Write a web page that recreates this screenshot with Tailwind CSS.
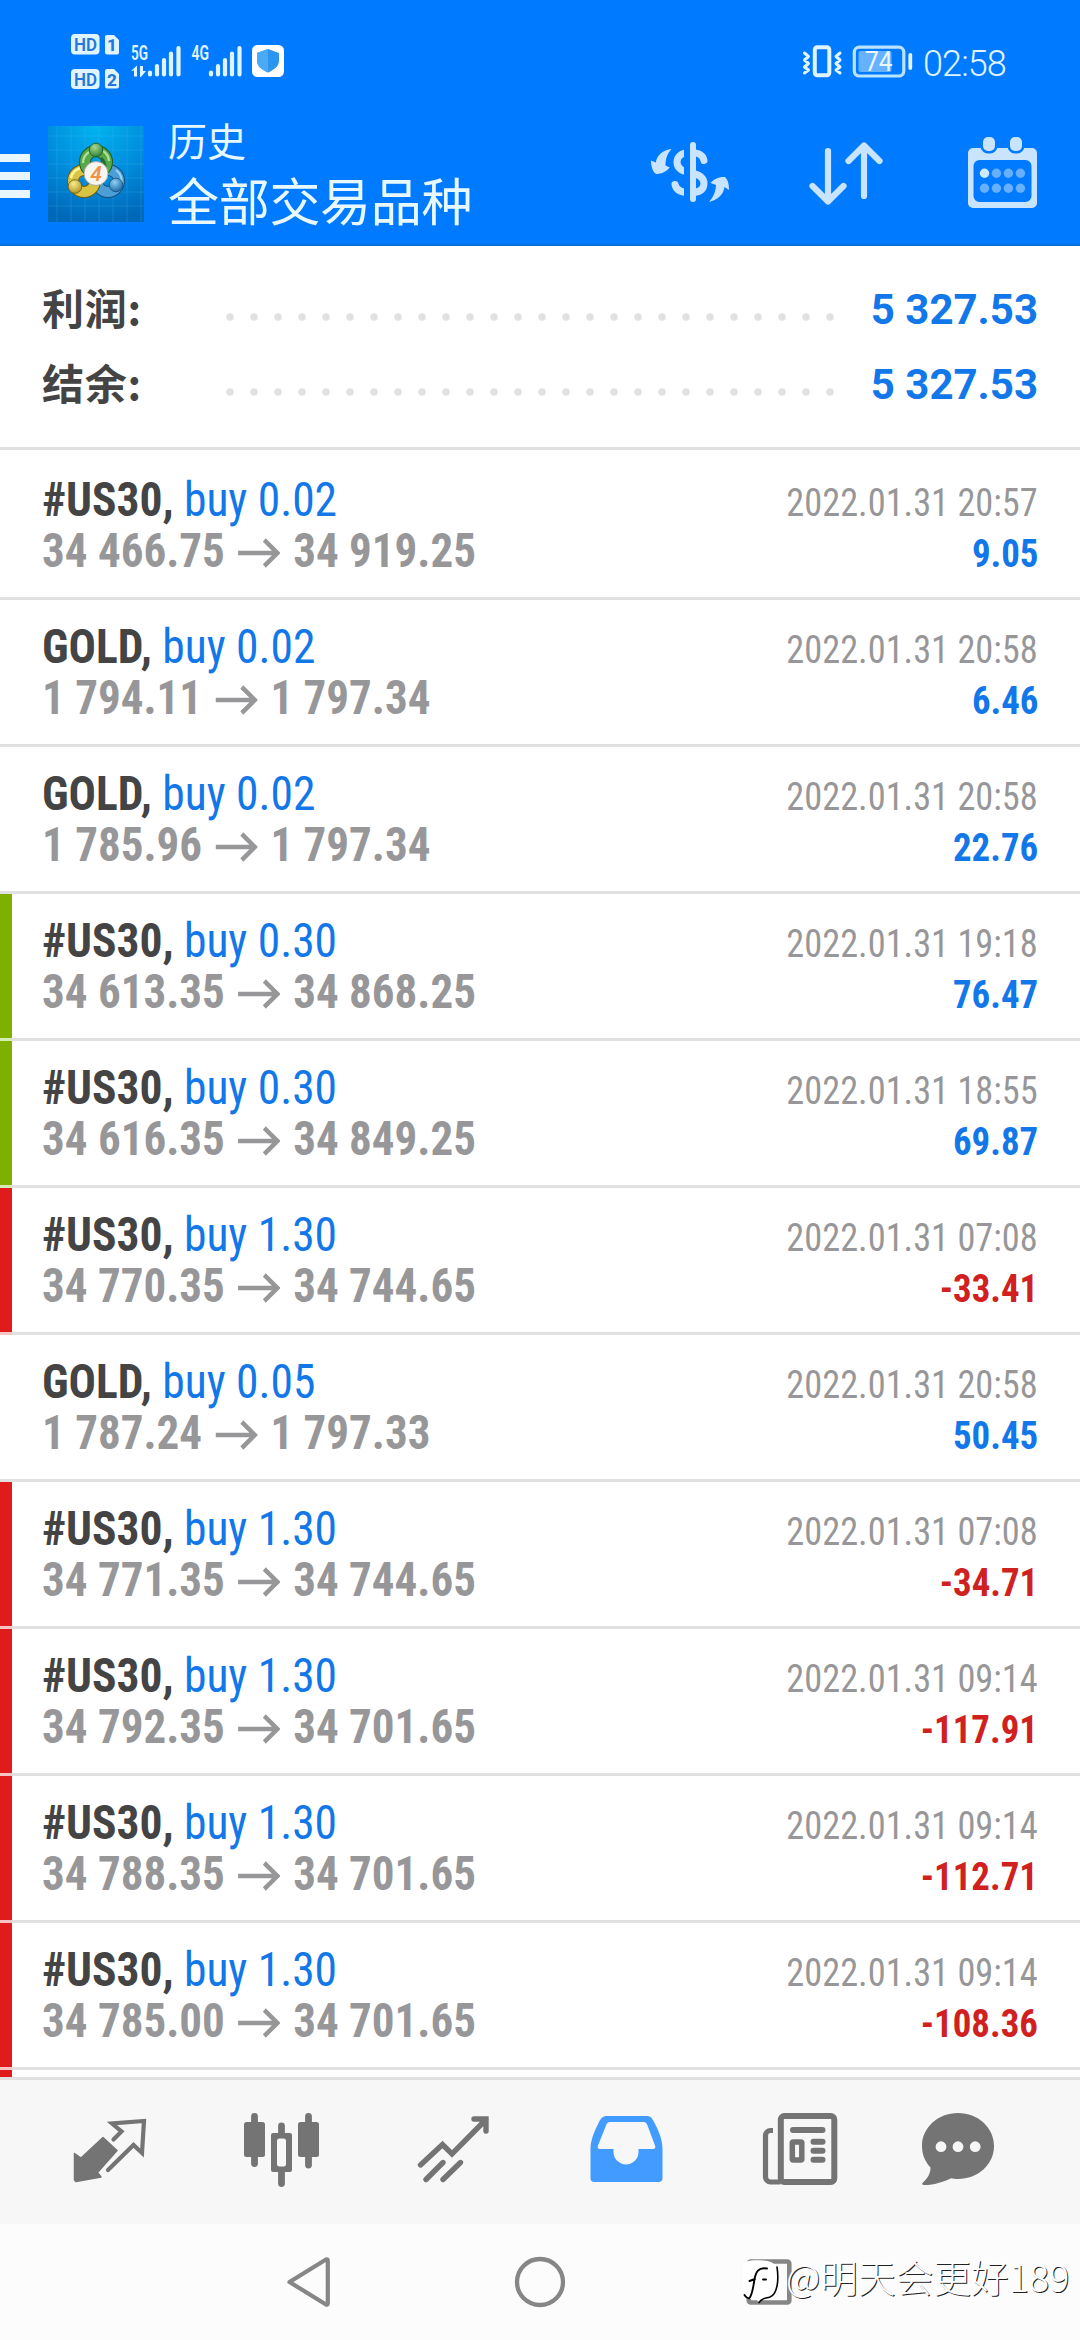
<!DOCTYPE html>
<html lang="zh-CN">
<head>
<meta charset="utf-8">
<title>历史</title>
<script src="https://cdn.jsdelivr.net/npm/@tailwindcss/browser@4"></script>
</head>
<body class="w-[1080px] h-[2340px] overflow-hidden bg-white flex flex-col relative font-['Roboto','Noto_Sans_CJK_SC',sans-serif]">

<header class="h-[246px] shrink-0 bg-[#007aff] border-b-2 border-[#0a6fd6] flex flex-col">
  <!-- status bar -->
  <div class="h-[123px] flex justify-between items-start pl-[70px] pr-[71px]">
    <svg class="w-[216px] h-[64px] mt-[30px]" viewBox="70 30 216 64" fill="#e0f4ff">
      <rect x="71" y="34" width="28.5" height="20.5" rx="4"/>
      <rect x="71" y="69" width="28.5" height="20" rx="4"/>
      <path d="M107 35h7l5 5v12.500a2 2 0 0 1-2 2h-10a2 2 0 0 1-2-2v-15.500a2 2 0 0 1 2-2zM107 69h7l5 5v12.500a2 2 0 0 1-2 2h-10a2 2 0 0 1-2-2v-15.500a2 2 0 0 1 2-2z"/>
      <g fill="#2478dc" font-family="Roboto" font-weight="600" font-size="19">
        <text x="74" y="51.300" textLength="23" lengthAdjust="spacingAndGlyphs">HD</text>
        <text x="74" y="86" textLength="23" lengthAdjust="spacingAndGlyphs">HD</text>
        <text x="107" y="51" font-size="17" font-weight="800">1</text>
        <text x="107" y="85.500" font-size="17" font-weight="800">2</text>
      </g>
      <g font-family="Roboto" font-weight="600" font-size="19.500">
        <text x="131" y="60" textLength="17" lengthAdjust="spacingAndGlyphs">5G</text>
        <text x="191.500" y="60" textLength="17.500" lengthAdjust="spacingAndGlyphs">4G</text>
      </g>
      <path d="M131 71l6-5.500v11h-3v-6zM140 66h3v5h3l-5 6h-1z"/>
      <g stroke="#e0f4ff" stroke-width="4.200" stroke-linecap="round">
        <path d="M150 72.500v2M157 66v8.500M164 60v14.500M171 53.500v21M178.500 48v26.500M211 72.500v2M218 66v8.500M225 60v14.500M232 53.500v21M239.500 48v26.500"/>
      </g>
      <rect x="252" y="45" width="32" height="32" rx="5.500" fill="#fff"/>
      <path d="M268 49l11 4v8c0 5-5 9-11 11.500c-6-2.500-11-6.500-11-11.500v-8z" fill="#2a96ef"/>
      <path d="M268 49v23.500c-6-2.500-11-6.500-11-11.500v-8z" fill="#4aaaf5"/>
    </svg>
    <div class="flex items-center mt-[42px] h-[40px]">
      <svg class="w-[116px] h-[40px] mr-[6px]" viewBox="801 42 116 40" fill="none" stroke="#e0f4ff">
        <rect x="814.800" y="47.300" width="14.500" height="28" rx="2.500" stroke-width="4"/>
        <path d="M804.500 53l4 3.500l-4 3.500l4 3.500l-4 3.500l4 3l-4 3M840 53l-4 3.500l4 3.500l-4 3.500l4 3.500l-4 3l4 3" stroke-width="3" stroke-linejoin="round" stroke-linecap="round"/>
        <rect x="854.300" y="47.200" width="49.500" height="28.800" rx="5" stroke-width="3.200" stroke="#b9e3ff"/>
        <rect x="858.500" y="51" width="33" height="21" rx="2" fill="#66b2ff" stroke="none"/>
        <path d="M910.300 55v13" stroke-width="3.800" stroke-linecap="round"/>
        <text x="865" y="71.300" textLength="27.500" lengthAdjust="spacingAndGlyphs" font-size="28" font-family="Roboto" fill="#eaf7ff" stroke="none">74</text>
      </svg>
      <span class="text-[36px] leading-[40px] mt-[3px] w-[86px] whitespace-nowrap font-['Roboto'] font-[350] text-[#e0f4ff] tracking-[-0.900px]">02:58</span>
    </div>
  </div>

  <!-- app bar -->
  <div class="flex-1 flex items-start">
    <div class="w-[30px] mt-[31px] flex flex-col gap-[10px]">
      <i class="h-2 bg-[#e8f7ff]"></i><i class="h-2 bg-[#e8f7ff]"></i><i class="h-2 bg-[#e8f7ff]"></i>
    </div>
    <svg class="w-[96px] h-[96px] ml-[18px] mt-[3px]" viewBox="48 126 96 96">
      <defs>
        <radialGradient id="bg" cx=".5" cy="0" r="1"><stop offset="0" stop-color="#00b4f0"/><stop offset=".55" stop-color="#008bdc"/><stop offset="1" stop-color="#0068b8"/></radialGradient>
        <radialGradient id="gr" cx=".4" cy=".3" r=".8"><stop offset="0" stop-color="#a8d890"/><stop offset="1" stop-color="#23772f"/></radialGradient>
        <radialGradient id="ye" cx=".4" cy=".3" r=".8"><stop offset="0" stop-color="#f8ec90"/><stop offset="1" stop-color="#a88a18"/></radialGradient>
        <radialGradient id="bl" cx=".4" cy=".3" r=".8"><stop offset="0" stop-color="#8fd0f4"/><stop offset="1" stop-color="#0f5fa0"/></radialGradient>
      </defs>
      <rect x="48" y="126" width="96" height="96" fill="url(#bg)"/>
      <path d="M57 126v96M71 126v96M85 126v96M99 126v96M113 126v96M127 126v96M141 126v96M48 136h96M48 150h96M48 164h96M48 178h96M48 192h96M48 206h96" stroke="#4cc4f4" stroke-opacity=".22" fill="none"/>
      <g fill="none">
        <circle cx="108" cy="181" r="11" stroke="#14507e" stroke-width="12"/>
        <circle cx="108" cy="181" r="11" stroke="#4b9fd6" stroke-width="10"/>
        <path d="M116 170a14 14 0 0 1 5 16" stroke="#a0d4f2" stroke-width="2"/>
        <circle cx="84" cy="181" r="11" stroke="#6d5c10" stroke-width="12"/>
        <circle cx="84" cy="181" r="11" stroke="#d8c440" stroke-width="10"/>
        <path d="M71 178a13 13 0 0 1 10-10" stroke="#fff3a0" stroke-width="2.500"/>
        <circle cx="96" cy="162" r="11" stroke="#1c5c28" stroke-width="12"/>
        <circle cx="96" cy="162" r="11" stroke="#56a848" stroke-width="10"/>
        <path d="M83 163a13 13 0 0 1 6-11M103 151a13 13 0 0 1 6 10" stroke="#b2e09a" stroke-width="2.200"/>
        <path d="M103 172c3-5 2-10-2-14" stroke="#1f7030" stroke-width="3"/>
      </g>
      <circle cx="96" cy="150" r="6.800" fill="url(#gr)" stroke="#1c5c28" stroke-width=".8"/>
      <circle cx="75" cy="186.500" r="6.800" fill="url(#ye)" stroke="#6d5c10" stroke-width=".8"/>
      <circle cx="116" cy="185" r="6.800" fill="url(#bl)" stroke="#14507e" stroke-width=".8"/>
      <circle cx="96" cy="173.500" r="12" fill="#f7f5f2" stroke="#a8a8a0" stroke-width="1"/>
      <text x="96" y="181" text-anchor="middle" font-family="Roboto" font-size="21" font-style="italic" font-weight="600" fill="#ee9448">4</text>
    </svg>
    <div class="ml-[24px] mt-[-2px] text-[#e8f8ff] flex-1 flex flex-col">
      <span class="text-[39px] leading-[44px]">历史</span>
      <span class="text-[51px] leading-[60px] mt-[9px] tracking-[-0.300px]">全部交易品种</span>
    </div>
    <div class="flex items-start mt-[12px] text-[#c8e4ff]">
      <svg class="w-[84px] h-[76px]" viewBox="648 135 84 76" fill="currentColor">
        <defs><clipPath id="cut"><path d="M660 140h24v70h-24zM695 140h24v70h-24z"/></clipPath></defs>
        <path d="M671.500 149C663 150 657 155 655.800 162.500L651 160.500C651 167 653 172 656 174C661 174 666 172 669.800 167.500L665.500 165.500C665.500 159 667 154 671.500 149z"/>
        <path d="M709 202C717 200 723.500 195 724.500 187L729 190C729 184 728 180 725 177C719 176.500 714 179 710.500 183L716 185C715.500 192 713.500 197 709 202z"/>
        <path clip-path="url(#cut)" d="M704 160.500C703 155 699 152.500 690 152.500C681 152.500 677 157 677 162C677 168 681 171 689 172.500C699 174 704 177 704 183.500C704 190 699 192.700 690 192.700C681 192.700 676 189.500 675 184.500" fill="none" stroke="currentColor" stroke-width="7" stroke-linecap="round"/>
        <path d="M693 145v54" stroke="currentColor" stroke-width="6" stroke-linecap="round"/>
      </svg>
      <svg class="w-[84px] h-[76px] ml-[72px]" viewBox="804 135 84 76" fill="none" stroke="currentColor" stroke-width="6.200" stroke-linecap="round" stroke-linejoin="round">
        <path d="M828 151v50M812.500 186l15.500 15.500l15.500-15.500M864 196v-50M848.500 161l15.500-15.500l15.500 15.500"/>
      </svg>
      <svg class="w-[84px] h-[76px] ml-[72px] mr-[36px]" viewBox="960 135 84 76">
        <path fill-rule="evenodd" fill="currentColor" d="M973 148h59a5 5 0 0 1 5 5v50a5 5 0 0 1-5 5h-59a5 5 0 0 1-5-5v-50a5 5 0 0 1 5-5zM979.500 160a6 6 0 0 0-6 6v30a6 6 0 0 0 6 6h46a6 6 0 0 0 6-6v-30a6 6 0 0 0-6-6z"/>
        <g fill="currentColor" stroke="#007aff" stroke-width="5" paint-order="stroke">
          <rect x="983" y="137" width="12" height="14" rx="5"/><rect x="1010" y="137" width="12" height="14" rx="5"/>
        </g>
        <circle cx="984.500" cy="173.300" r="4.700" fill="#cfeaff"/>
        <g fill="#66b0ff"><circle cx="996.400" cy="173.300" r="4.700"/><circle cx="1008.400" cy="173.300" r="4.700"/><circle cx="1020.400" cy="173.300" r="4.700"/><circle cx="984.500" cy="188.300" r="4.700"/><circle cx="996.400" cy="188.300" r="4.700"/><circle cx="1008.400" cy="188.300" r="4.700"/><circle cx="1020.400" cy="188.300" r="4.700"/></g>
      </svg>
    </div>
  </div>
</header>

<!-- totals -->
<section class="h-[204px] shrink-0 border-b-3 border-[#e1e1e1] pt-[26px] px-[42px] text-[42px] leading-[75px] font-bold">
  <div class="flex h-[75px] items-center">
    <span class="w-[180px] h-[75px] leading-[70px] text-[#444] font-['Noto_Sans_CJK_SC'] font-bold tracking-[0.800px]">利润:</span>
    <svg class="w-[612px] h-[10px] mt-[14px]" viewBox="222 0 612 10"><path d="M230 5h601" stroke="#e1e1e1" stroke-width="7.500" stroke-linecap="round" stroke-dasharray="0 24"/></svg>
    <span class="flex-1 text-right text-[#1277e8]">5 327.53</span>
  </div>
  <div class="flex h-[75px] items-center">
    <span class="w-[180px] h-[75px] leading-[70px] text-[#444] font-['Noto_Sans_CJK_SC'] font-bold tracking-[0.800px]">结余:</span>
    <svg class="w-[612px] h-[10px] mt-[14px]" viewBox="222 0 612 10"><path d="M230 5h601" stroke="#e1e1e1" stroke-width="7.500" stroke-linecap="round" stroke-dasharray="0 24"/></svg>
    <span class="flex-1 text-right text-[#1277e8]">5 327.53</span>
  </div>
</section>

<main id="deals" class="h-[1627px] shrink-0 pt-[3px] overflow-hidden flex flex-col"></main>

<!-- tab bar -->
<nav class="h-[147px] shrink-0 bg-[#f7f7f7] border-t-3 border-[#e1e1e1] flex items-start pt-[24px] pl-[64px] text-[#747474]">
  <svg class="w-[90px] h-[90px]" viewBox="64 2104 90 90">
    <path d="M74.500 2153.500L81 2158L103 2137.500L117 2150.500L97.500 2172.500L101 2177L76 2181.500L74.500 2180z" fill="currentColor" stroke="currentColor" stroke-width="1.500" stroke-linejoin="round"/>
    <path d="M113.500 2139.500L121.500 2131.500L112 2123.500L144 2121L142 2153L133.500 2145L108 2170" fill="none" stroke="currentColor" stroke-width="4.200" stroke-linecap="round"/>
  </svg>
  <svg class="w-[90px] h-[90px] ml-[83px]" viewBox="237 2104 90 90" fill="currentColor">
    <rect x="244" y="2122" width="21" height="35" rx="2.500"/><rect x="298" y="2122" width="21" height="35" rx="2.500"/>
    <path fill-rule="evenodd" d="M273 2133h17a2 2 0 0 1 2 2v35a2 2 0 0 1-2 2h-17a2 2 0 0 1-2-2v-35a2 2 0 0 1 2-2zM279.500 2138.500a2.500 2.500 0 0 0-2.500 2.500v23a2.500 2.500 0 0 0 2.500 2.500h4a2.500 2.500 0 0 0 2.500-2.500v-23a2.500 2.500 0 0 0-2.500-2.500z"/>
    <path d="M254.500 2116.500v47M308.500 2116.500v48.500M281.500 2126v8M281.500 2171v12.500" stroke="currentColor" stroke-width="6.800" stroke-linecap="round"/>
  </svg>
  <svg class="w-[90px] h-[90px] ml-[82px]" viewBox="409 2104 90 90" fill="none" stroke="currentColor" stroke-width="5.400" stroke-linecap="round">
    <path d="M420.500 2165L442.500 2144.500L452 2154L486 2119.500M474 2119H486V2131M426 2179.500L443 2162.500M443 2179.500L460.500 2162.500"/>
  </svg>
  <svg class="w-[90px] h-[90px] ml-[82px]" viewBox="581 2104 90 90">
    <path fill-rule="evenodd" fill="#429bff" d="M607 2116h39.500c4 0 5.500 2 7.500 6c5 9 8.500 18 8.500 27v29a4 4 0 0 1-4 4h-64a4 4 0 0 1-4-4v-29c0-9 4-18 8.500-27c2-4 4-6 8-6zM610 2122c-2 0-3 1-3.800 3l-8.200 20.500c-.8 2-.2 3.500 2 3.500h13.500v3a12.500 12.500 0 0 0 25 0v-3h14.500c2.200 0 2.800-1.500 2-3.500l-7.700-20.500c-.8-2-1.800-3-3.800-3z"/>
  </svg>
  <svg class="w-[90px] h-[90px] ml-[84px]" viewBox="755 2104 90 90" fill="none" stroke="currentColor" stroke-width="6">
    <rect x="780.800" y="2116" width="53.500" height="66" rx="3.500"/>
    <path d="M773 2130.500h-2.500a5 5 0 0 0-5 5v41.500a5 5 0 0 0 5 5h10" stroke-width="5.200"/>
    <path d="M793 2130h29.500M813.500 2141.800h9M813.500 2150.800h9M813.500 2159.800h9" stroke-linecap="round"/>
    <rect x="792.300" y="2142" width="9.500" height="18" rx="1" stroke-width="5.500"/>
  </svg>
  <svg class="w-[90px] h-[90px] ml-[68px]" viewBox="913 2104 90 90">
    <path fill="currentColor" d="M958 2113c20 0 36 14.500 36 33s-16 33-36 33c-3 0-5-.3-7-.8c-8 4-18 7-27 6.800c-2 0-2.500-1-1-2.500c5-5 7.500-9 7.500-15c-5.500-6-8.500-13-8.500-21.500c0-18.500 16-33 36-33z"/>
    <g fill="#f7f7f7"><circle cx="941" cy="2146.700" r="5.400"/><circle cx="958" cy="2146.700" r="5.400"/><circle cx="975.200" cy="2146.700" r="5.400"/></g>
  </svg>
</nav>

<!-- system navigation -->
<footer class="h-[116px] shrink-0 bg-[#fcfcfc] flex items-start pt-[28px] pl-[280px]">
  <svg class="w-[60px] h-[60px]" viewBox="280 2252 60 60" fill="none" stroke="#868686" stroke-width="4.200" stroke-linejoin="round"><path d="M289.500 2282L326 2259.500C327 2259 327.800 2259.300 327.800 2260.500V2303.500C327.800 2304.700 327 2305 326 2304.500z"/></svg>
  <svg class="w-[60px] h-[60px] ml-[170px]" viewBox="510 2252 60 60"><circle cx="540" cy="2282" r="23" fill="none" stroke="#868686" stroke-width="4.300"/></svg>
  <svg class="w-[60px] h-[60px] ml-[169px]" viewBox="739 2252 60 60"><rect x="748.800" y="2261.500" width="40.500" height="41" rx="2" fill="none" stroke="#868686" stroke-width="4.600"/></svg>
</footer>

<!-- watermark laid over the navigation bar -->
<div class="absolute left-[740px] top-[2252px] h-[56px] flex items-start">
  <svg class="w-[46px] h-[56px]" viewBox="740 2252 46 56" fill="none" stroke="#000" stroke-linecap="round">
    <path d="M743 2266C745 2260 752 2260 764 2260.500C774 2261 778 2266 778 2276C778 2288 775 2296 764 2298L758 2302L757 2299H749C743 2298 743 2290 743 2282z" fill="#fff" stroke="none"/>
    <path d="M777 2267C779 2280 777.500 2294 770 2297C765 2298.500 762 2298 759 2302.500" stroke-width="1.600"/>
    <path d="M767 2268.500C758 2267 756 2272 754.500 2279C753.500 2286 752.500 2294 749.500 2298C747 2299 746 2297 744.500 2295M749.500 2281l5.500-2M763 2279.500h3" stroke-width="1.900"/>
  </svg>
  <span class="text-[37.500px] leading-[48px] tracking-[0.200px] whitespace-nowrap font-['Noto_Sans_CJK_SC'] font-light text-white [text-shadow:1px_1px_0_#222]">@明天会更好189</span>
</div>

<script>
const deals = [
  ['#US30', '0.02', '34 466.75', '34 919.25', '20:57', '9.05', ''],
  ['GOLD', '0.02', '1 794.11', '1 797.34', '20:58', '6.46', ''],
  ['GOLD', '0.02', '1 785.96', '1 797.34', '20:58', '22.76', ''],
  ['#US30', '0.30', '34 613.35', '34 868.25', '19:18', '76.47', 'tp'],
  ['#US30', '0.30', '34 616.35', '34 849.25', '18:55', '69.87', 'tp'],
  ['#US30', '1.30', '34 770.35', '34 744.65', '07:08', '-33.41', 'sl'],
  ['GOLD', '0.05', '1 787.24', '1 797.33', '20:58', '50.45', ''],
  ['#US30', '1.30', '34 771.35', '34 744.65', '07:08', '-34.71', 'sl'],
  ['#US30', '1.30', '34 792.35', '34 701.65', '09:14', '-117.91', 'sl'],
  ['#US30', '1.30', '34 788.35', '34 701.65', '09:14', '-112.71', 'sl'],
  ['#US30', '1.30', '34 785.00', '34 701.65', '09:14', '-108.36', 'sl'],
];
const mark = {
  '': 'w-3 border-b-3 border-[#e1e1e1]',
  tp: 'w-3 bg-[#7fb000] border-b-3 border-[#d5ecb4]',
  sl: 'w-3 bg-[#e01b1b] border-b-3 border-[#f8c4c4]',
};
const arrow = '<svg class="w-[45px] h-[30px] mx-[14px] inline-block align-[-1px]" viewBox="0 0 45 30" fill="none" stroke="#979799" stroke-width="4.600"><path d="M0 15H42M28 2L42 15L28 28"/></svg>';
document.getElementById('deals').innerHTML = deals.map(([sym, vol, open, close, time, profit, kind]) => `
  <article class="h-[147px] shrink-0 flex">
    <div class="${mark[kind]}"></div>
    <div class="flex-1 border-b-3 border-[#e1e1e1] pt-[21px] pl-[30px] pr-[42px] leading-[51px] whitespace-nowrap font-['Roboto_Condensed','Roboto',sans-serif] font-stretch-condensed">
      <div class="h-[51px] flex justify-between items-baseline">
        <span class="text-[48px] text-[#1277e8] origin-left scale-x-[0.947]"><b class="font-bold text-[#444]">${sym},</b> buy ${vol}</span>
        <span class="text-[39px] text-[#979799] origin-right scale-x-[0.932]">2022.01.31 ${time}</span>
      </div>
      <div class="h-[51px] flex justify-between items-baseline font-bold">
        <span class="text-[48px] text-[#979799] origin-left scale-x-[0.938]">${open}${arrow}${close}</span>
        <span class="${profit[0] === '-' ? 'text-[39px] text-[#d02020] origin-right scale-x-[0.945]' : 'text-[39px] text-[#1277e8] origin-right scale-x-[0.945]'}">${profit}</span>
      </div>
    </div>
  </article>`).join('') + '<div class="w-3 h-[7px] shrink-0 bg-[#e01b1b]"></div>';
</script>
</body>
</html>
